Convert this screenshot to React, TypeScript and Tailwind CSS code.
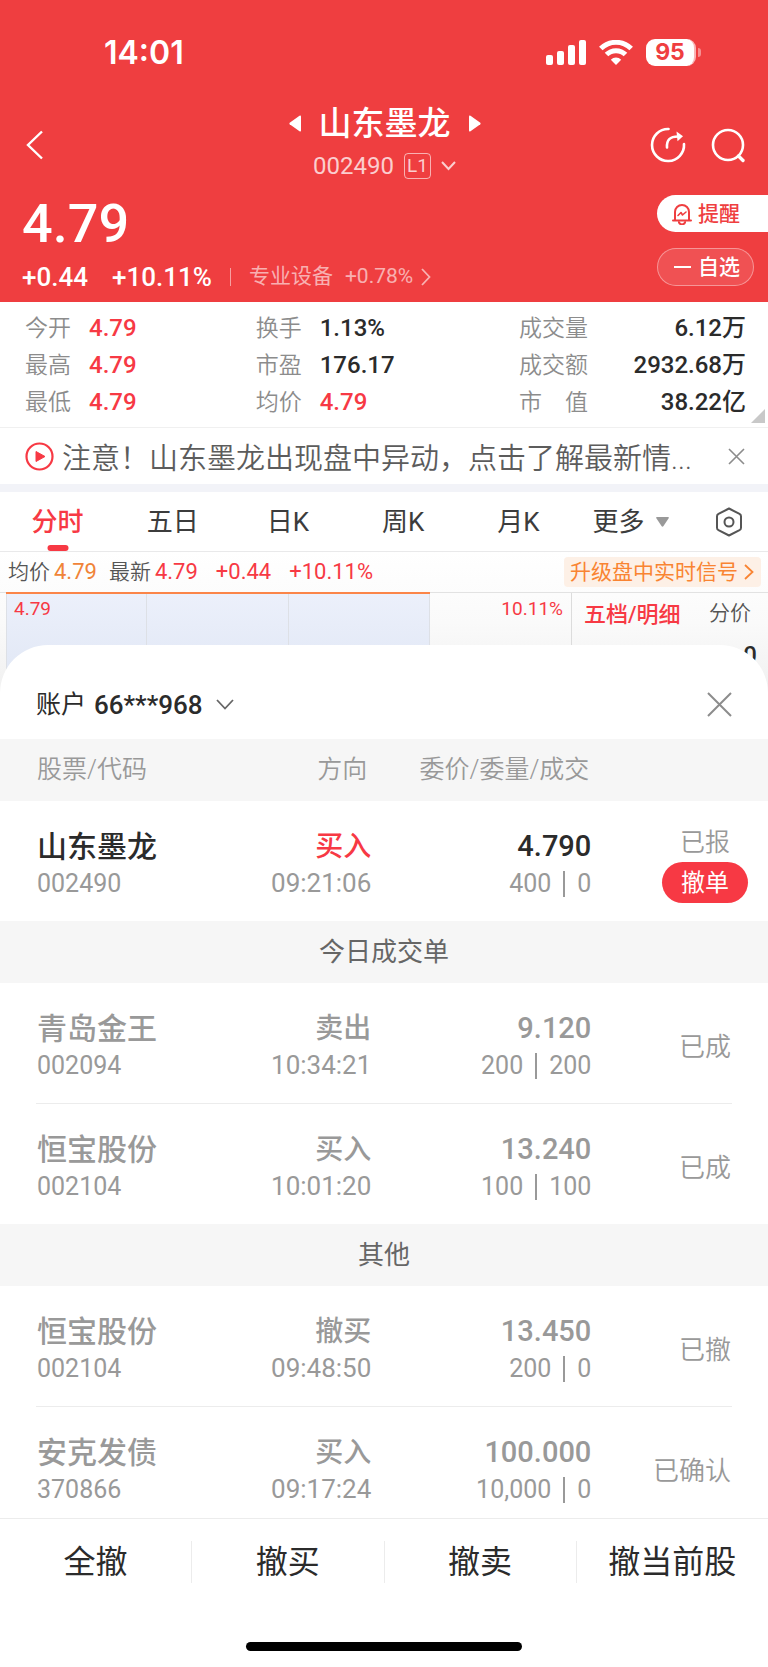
import React from 'react';

interface Stat {
  label: string;
  value: string;
  up?: boolean;
}

interface Order {
  name: string;
  code: string;
  side: string;
  time: string;
  price: string;
  qty: string;
  filled: string;
  status: string;
  active?: boolean;
}

const STATS: Stat[][] = [
  [
    { label: '今开', value: '4.79', up: true },
    { label: '最高', value: '4.79', up: true },
    { label: '最低', value: '4.79', up: true },
  ],
  [
    { label: '换手', value: '1.13%' },
    { label: '市盈', value: '176.17' },
    { label: '均价', value: '4.79', up: true },
  ],
  [
    { label: '成交量', value: '6.12万' },
    { label: '成交额', value: '2932.68万' },
    { label: '市\u3000值', value: '38.22亿' },
  ],
];

const TABS = ['分时', '五日', '日K', '周K', '月K'];

const PENDING: Order[] = [
  { name: '山东墨龙', code: '002490', side: '买入', time: '09:21:06', price: '4.790', qty: '400', filled: '0', status: '已报', active: true },
];

const FILLED: Order[] = [
  { name: '青岛金王', code: '002094', side: '卖出', time: '10:34:21', price: '9.120', qty: '200', filled: '200', status: '已成' },
  { name: '恒宝股份', code: '002104', side: '买入', time: '10:01:20', price: '13.240', qty: '100', filled: '100', status: '已成' },
];

const OTHERS: Order[] = [
  { name: '恒宝股份', code: '002104', side: '撤买', time: '09:48:50', price: '13.450', qty: '200', filled: '0', status: '已撤' },
  { name: '安克发债', code: '370866', side: '买入', time: '09:17:24', price: '100.000', qty: '10,000', filled: '0', status: '已确认' },
];

const ACTIONS = ['全撤', '撤买', '撤卖', '撤当前股'];

function StatusBar() {
  return (
    <div className="flex h-[104px] items-center justify-between pr-[67px] pl-[104px]">
      <span className="pt-[2px] font-[Inter,sans-serif] text-[32px] leading-8 font-semibold">14:01</span>
      <div className="flex items-center gap-[13px]">
        <svg width="40" height="25" viewBox="0 0 40 25" fill="currentColor" aria-hidden="true">
          <rect x="0" y="15" width="7" height="10" rx="2" />
          <rect x="11" y="11" width="7" height="14" rx="2" />
          <rect x="22" y="5" width="7" height="20" rx="2" />
          <rect x="33" y="0" width="7" height="25" rx="2" />
        </svg>
        <svg width="34" height="25" viewBox="0 0 34 25" fill="none" stroke="currentColor" strokeWidth="5" aria-hidden="true">
          <path d="M1.8 8.6a21.5 21.5 0 0 1 30.4 0" />
          <path d="M7.5 14.6a13.4 13.4 0 0 1 19 0" />
          <path d="M17 25l-5.2-5.3a7.4 7.4 0 0 1 10.4 0z" fill="currentColor" stroke="none" />
        </svg>
        <div className="flex items-center gap-[2px]">
          <span className="flex h-[27px] w-[50px] items-center justify-center rounded-[9px] border-r-2 border-[#f9b4b5] bg-white font-[Inter,sans-serif] text-[23px] leading-6 font-bold text-[#ef3e40]">
            95
          </span>
          <span className="h-[9px] w-[3px] rounded-r-full bg-[#f69092]" />
        </div>
      </div>
    </div>
  );
}

function QuoteHeader() {
  return (
    <header className="h-[302px] bg-[#ef3e40] text-white">
      <StatusBar />
      <div className="flex h-[82px] justify-between pr-[22px] pl-[26px]">
        <button type="button" aria-label="返回" className="flex w-[96px] items-center">
          <svg width="17" height="30" viewBox="0 0 17 30" fill="none" stroke="currentColor" strokeWidth="2.4">
            <path d="M16 1.5L2 15l14 13.5" />
          </svg>
        </button>
        <div className="flex flex-col items-center">
          <div className="flex items-center gap-[18px]">
            <button type="button" aria-label="上一只">
              <svg width="12" height="17" viewBox="0 0 12 17" fill="currentColor">
                <path d="M12 1.5v14q0 1.5-1.5.7L.7 9.3Q0 8.5.7 7.7L10.5.8Q12 0 12 1.5z" />
              </svg>
            </button>
            <h1 className="pt-[2px] text-[33px] leading-9 font-medium">山东墨龙</h1>
            <button type="button" aria-label="下一只">
              <svg width="12" height="17" viewBox="0 0 12 17" fill="currentColor">
                <path d="M0 1.5v14q0 1.5 1.5.7l9.8-6.9q.7-.8 0-1.6L1.5.8Q0 0 0 1.5z" />
              </svg>
            </button>
          </div>
          <button type="button" className="mt-2 flex h-8 items-center text-white/75">
            <span className="text-[24px] leading-8">002490</span>
            <span className="ml-[10px] flex h-[26px] w-[27px] items-center justify-center rounded border border-white/60 text-[19px] leading-6">L1</span>
            <svg width="15" height="10" viewBox="0 0 15 10" fill="none" stroke="currentColor" strokeWidth="2" className="ml-[10px]">
              <path d="M1 1l6.5 7L14 1" />
            </svg>
          </button>
        </div>
        <div className="flex w-[99px] items-center justify-end gap-6">
          <button type="button" aria-label="分享">
            <svg width="36" height="36" viewBox="0 0 36 36" fill="none" stroke="currentColor" strokeWidth="2.6" strokeLinecap="round">
              <path d="M18.5 2A16 16 0 1 0 34 17" />
              <path d="M17 20.5C16.5 13 20 9.5 28 9.5" />
              <path d="M26.5 4.5l6.5 4.8-5.5 5z" fill="currentColor" stroke="none" />
            </svg>
          </button>
          <button type="button" aria-label="搜索">
            <svg width="36" height="36" viewBox="0 0 36 36" fill="none" stroke="currentColor" strokeWidth="2.6" strokeLinecap="round">
              <circle cx="18" cy="18" r="15" />
              <path d="M28.5 29l4.5 4.5" strokeWidth="3.4" />
            </svg>
          </button>
        </div>
      </div>
      <div className="flex justify-between pl-[22px]">
        <div>
          <p className="mt-[10px] text-[54px] leading-[56px] font-medium">4.79</p>
          <div className="mt-[9px] flex h-8 items-center text-[26px] font-medium">
            <span>+0.44</span>
            <span className="ml-6">+10.11%</span>
            <span className="ml-[18px] h-[18px] w-px bg-white/50" />
            <a href="#sector" className="ml-[18px] flex items-center text-[21px] font-normal text-white/60">
              专业设备
              <span className="ml-3">+0.78%</span>
              <svg width="10" height="18" viewBox="0 0 10 18" fill="none" stroke="currentColor" strokeWidth="1.8" className="ml-2">
                <path d="M1 1l7.5 8L1 17" />
              </svg>
            </a>
          </div>
        </div>
        <div className="mt-[9px] flex w-[111px] flex-col items-start gap-4">
          <button type="button" className="flex h-[37px] w-full items-center gap-[6px] rounded-l-full bg-white pl-[15px] text-[21px] leading-6 font-medium text-[#ef3e40]">
            <svg width="20" height="22" viewBox="0 0 20 22" fill="none" stroke="currentColor" strokeWidth="2" strokeLinecap="round" strokeLinejoin="round">
              <path d="M3 17V9a7 7 0 0 1 14 0v8" />
              <path d="M1 17.5h18M7 19.5a3.3 3.3 0 0 0 6 0" />
              <path d="M6 12.5l3-3 1.5 2.5 3.5-3" strokeWidth="1.6" />
            </svg>
            提醒
          </button>
          <button type="button" className="flex h-[38px] w-[97px] items-center gap-[7px] rounded-full border border-white/40 bg-white/10 pl-4 text-[21px] leading-6 font-medium">
            <span className="h-[2px] w-[17px] bg-white" />
            自选
          </button>
        </div>
      </div>
    </header>
  );
}

function StatsGrid() {
  return (
    <section className="relative grid h-[126px] grid-cols-[64fr_73fr_63fr] border-b border-[#f0f0f0] pt-[2px] pr-[22px] pl-[25px]">
      {STATS.map((column, i) => (
        <dl key={i} className="grid grid-cols-[auto_1fr] content-center gap-x-[18px] text-[24px] leading-[37px]">
          {column.map(s => (
            <React.Fragment key={s.label}>
              <dt className="text-[23px] font-[350] text-[#8c8c8c]">{s.label}</dt>
              <dd className={`font-medium ${s.up ? 'text-[#f73944]' : 'text-[#2b2b2b]'} ${i === 2 ? 'text-right' : ''}`}>{s.value}</dd>
            </React.Fragment>
          ))}
        </dl>
      ))}
      {/* expand corner */}
      <svg width="14" height="14" viewBox="0 0 14 14" fill="#c8c8c8" className="absolute right-[3px] bottom-1" aria-hidden="true">
        <path d="M14 0v14H0z" />
      </svg>
    </section>
  );
}

function Notice() {
  return (
    <div className="flex h-[56px] items-center pr-[23px] pl-[25px] text-[#5c5c5c]">
      <svg width="29" height="29" viewBox="0 0 29 29" className="shrink-0 text-[#f73944]" aria-hidden="true">
        <circle cx="14.5" cy="14.5" r="13" fill="none" stroke="currentColor" strokeWidth="2.2" />
        <path d="M11 9.5v10l9-5z" fill="currentColor" stroke="currentColor" strokeLinejoin="round" />
      </svg>
      <p className="ml-2 flex-1 pt-[6px] text-[29px] leading-10 font-[350] whitespace-nowrap">注意！山东墨龙出现盘中异动，点击了解最新情...</p>
      <button type="button" aria-label="关闭提示" className="text-[#8c8c8c]">
        <svg width="17" height="17" viewBox="0 0 17 17" fill="none" stroke="currentColor" strokeWidth="1.6">
          <path d="M1 1l15 15M16 1L1 16" />
        </svg>
      </button>
    </div>
  );
}

function ChartTabs() {
  return (
    <nav className="flex h-[60px] border-b border-[#e9e9ea] text-[26px] leading-8 text-[#3c3c3c]">
      {TABS.map((tab, i) => (
        <button
          key={tab}
          type="button"
          className={`relative w-[15%] ${i === 0 ? 'font-medium text-[#f73944]' : ''}`}
        >
          {tab}
          {i === 0 && <span className="absolute bottom-0 left-1/2 h-[6px] w-[21px] -translate-x-1/2 rounded-sm bg-[#f73944]" />}
        </button>
      ))}
      <button type="button" className="flex w-[15%] items-center justify-center gap-[11px] pr-[6px]">
        更多
        <svg width="13" height="10" viewBox="0 0 13 10" fill="#999">
          <path d="M1 0h11q1.5 0 .5 1.5L7.5 9q-1 1.5-2 0L.5 1.5Q-.5 0 1 0z" />
        </svg>
      </button>
      <button type="button" aria-label="设置" className="flex flex-1 items-center justify-center pr-[2px]">
        <svg width="28" height="30" viewBox="0 0 28 30" fill="none" stroke="#555" strokeWidth="2">
          <path d="M14 1.5l10.5 5.3q1.5.8 1.5 2.4v11.6q0 1.6-1.5 2.4L14 28.5 3.5 23.2Q2 22.4 2 20.8V9.2q0-1.6 1.5-2.4z" strokeLinejoin="round" />
          <circle cx="14" cy="15" r="4.5" />
        </svg>
      </button>
    </nav>
  );
}

function ChartPreview() {
  return (
    <section className="bg-linear-to-b from-white via-[#fafafa] to-[#f0f0f0]">
      <div className="flex h-[40px] items-center pr-[7px] pl-2 text-[22px] leading-6 text-[#f73944]">
        <span className="text-[21px] font-[350] text-[#555]">均价</span>
        <span className="ml-1 text-[#f08438]">4.79</span>
        <span className="ml-3 text-[21px] font-[350] text-[#555]">最新</span>
        <span className="ml-1">4.79</span>
        <span className="ml-[18px]">+0.44</span>
        <span className="ml-[18px]">+10.11%</span>
        <a href="#signal" className="ml-auto flex h-[30px] items-center gap-[6px] rounded bg-[#fdf0e6] pr-[7px] pl-[6px] text-[21px] text-[#f98432]">
          升级盘中实时信号
          <svg width="10" height="16" viewBox="0 0 10 16" fill="none" stroke="currentColor" strokeWidth="1.8">
            <path d="M1 1l7.5 7L1 15" />
          </svg>
        </a>
      </div>
      <div className="flex h-[101px] border-t border-[#e2e2e2] pl-[6px]">
        <div className="flex flex-1 justify-between border-r border-[#dcdcdc] text-[19px] leading-6 text-[#f73944]">
          <div className="-mt-px grid w-[75%] grid-cols-3 border-t-2 border-[#fb8549] bg-linear-to-b from-[#ecf0fb] to-[#dfe6f4]">
            <span className="border-x border-[#dde0e6] pt-[3px] pl-[7px]">4.79</span>
            <span className="border-r border-[#dde0e6]" />
            <span className="border-r border-[#dde0e6]" />
          </div>
          <span className="pt-1 pr-2">10.11%</span>
        </div>
        <div className="w-[196px] pr-[11px] pl-3">
          <div className="flex h-[42px] items-center justify-between text-[22px]">
            <button type="button" className="font-medium text-[#f73944]">五档/明细</button>
            <button type="button" className="mr-[6px] text-[21px] font-[350] text-[#555]">分价</button>
          </div>
          <p className="mt-2 text-right text-[24px] leading-6 font-medium text-[#2b2b2b]">0</p>
        </div>
      </div>
    </section>
  );
}

function OrderRow({ order, last }: { order: Order; last?: boolean }) {
  return (
    <tr className={`align-top text-[25px] leading-8 text-[#999] ${last ? 'h-[111px]' : 'h-[120px]'}`}>
      <td className="pt-[26px] pl-[37px]">
        <div className={`text-[30px] leading-10 font-medium ${order.active ? 'text-[#2b2b2b]' : ''}`}>{order.name}</div>
        <div className="mt-px">{order.code}</div>
      </td>
      <td className="pt-[26px] pr-[5px] text-right">
        <div className={`text-[28px] leading-10 font-medium ${order.active ? 'text-[#f73944]' : ''}`}>{order.side}</div>
        <div className="text-[26px]">{order.time}</div>
      </td>
      <td className="pt-[25px] text-right">
        <div className={`text-[29px] leading-10 font-medium ${order.active ? 'text-[#2b2b2b]' : ''}`}>{order.price}</div>
        <div className="mt-[2px] flex items-center justify-end gap-3">
          {order.qty}
          <span className="h-[26px] w-[2px] bg-[#999]" />
          {order.filled}
        </div>
      </td>
      {order.active ? (
        <td className="pt-[26px] pr-5">
          <div className="ml-auto flex w-[86px] flex-col items-center">
            <span className="font-[350]">{order.status}</span>
            <button type="button" className="mt-[3px] h-[41px] w-full rounded-full bg-[#f73944] text-[24px] text-white">撤单</button>
          </div>
        </td>
      ) : (
        <td className="pt-[48px] pr-[37px] text-right text-[26px] font-[350]">{order.status}</td>
      )}
    </tr>
  );
}

function DividerRow() {
  return (
    <tr aria-hidden="true">
      <td colSpan={4} className="px-9">
        <div className="h-px bg-[#ececec]" />
      </td>
    </tr>
  );
}

function SectionRow({ title }: { title: string }) {
  return (
    <tr className="h-[62px] bg-[#f6f6f6]">
      <th colSpan={4} scope="colgroup" className="text-[26px] leading-8 font-normal text-[#666]">{title}</th>
    </tr>
  );
}

function OrdersSheet() {
  return (
    <section className="relative -mt-12 rounded-t-[48px] bg-white">
      <div className="flex h-[94px] items-center justify-between px-9 pt-6">
        <button type="button" className="flex items-center pt-[2px] text-[25px] leading-8 text-[#2b2b2b]">
          账户
          <span className="ml-2 text-[26px] font-medium">66***968</span>
          <svg width="18" height="12" viewBox="0 0 18 12" fill="none" stroke="#666" strokeWidth="1.8" className="ml-[14px]">
            <path d="M1 1l8 8.5L17 1" />
          </svg>
        </button>
        <button type="button" aria-label="关闭" className="text-[#8c8c8c]">
          <svg width="25" height="25" viewBox="0 0 25 25" fill="none" stroke="currentColor" strokeWidth="2">
            <path d="M1 1l23 23M24 1L1 24" />
          </svg>
        </button>
      </div>
      <table className="w-full table-fixed border-collapse">
        <colgroup>
          <col className="w-[27%]" />
          <col className="w-[22%]" />
          <col className="w-[28%]" />
          <col className="w-[23%]" />
        </colgroup>
        <thead className="bg-[#f6f6f6] text-[25px] leading-8 text-[#999]">
          <tr className="h-[62px]">
            <th scope="col" className="pl-[37px] text-left font-[350]">股票/代码</th>
            <th scope="col" className="pr-[9px] text-right font-[350]">方向</th>
            <th scope="col" className="pr-[2px] text-right font-[350]">委价/委量/成交</th>
            <th scope="col" aria-label="状态" />
          </tr>
        </thead>
        <tbody>
          {PENDING.map(o => <OrderRow key={o.time} order={o} />)}
          <SectionRow title="今日成交单" />
          {FILLED.map((o, i) => (
            <React.Fragment key={o.time}>
              {i > 0 && <DividerRow />}
              <OrderRow order={o} />
            </React.Fragment>
          ))}
          <SectionRow title="其他" />
          {OTHERS.map((o, i) => (
            <React.Fragment key={o.time}>
              {i > 0 && <DividerRow />}
              <OrderRow order={o} last={i === OTHERS.length - 1} />
            </React.Fragment>
          ))}
        </tbody>
      </table>
    </section>
  );
}

function BottomBar() {
  return (
    <footer className="border-t border-[#ececec] bg-white">
      <div className="flex h-[86px] items-center">
        {ACTIONS.map((action, i) => (
          <button
            key={action}
            type="button"
            className={`h-[42px] flex-1 text-[32px] leading-[42px] text-[#2b2b2b] ${i > 0 ? 'border-l border-[#ececec]' : ''}`}
          >
            {action}
          </button>
        ))}
      </div>
      <div className="flex justify-center pt-[37px] pb-[15px]">
        <span className="h-[9px] w-[36%] rounded-full bg-black" />
      </div>
    </footer>
  );
}

export default function App() {
  return (
    <main lang="zh-CN" className="w-full bg-white font-[Roboto,'Noto_Sans_CJK_SC',sans-serif]">
      <QuoteHeader />
      <StatsGrid />
      <Notice />
      <div className="h-2 bg-[#f2f3f8]" />
      <ChartTabs />
      <ChartPreview />
      <OrdersSheet />
      <BottomBar />
    </main>
  );
}
